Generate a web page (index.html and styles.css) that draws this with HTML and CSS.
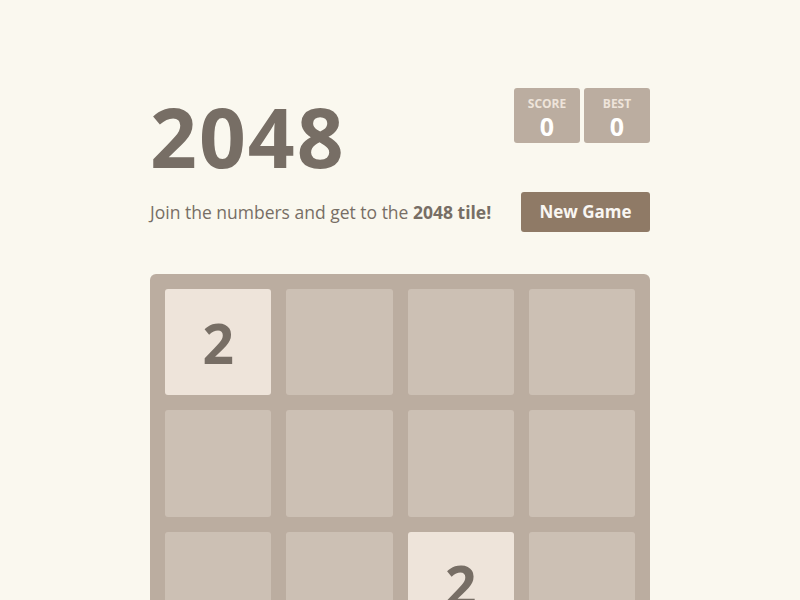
FILE: index.html
```html
<!DOCTYPE html>
<html>
<head>
<meta charset="utf-8">
<link rel="stylesheet" href="styles.css">
</head>
<body>
<div class="container">
  <div class="heading">
    <h1 class="title">2048</h1>
    <div class="scores">
      <div class="score-box"><div class="label">SCORE</div><div class="value">0</div></div>
      <div class="score-box"><div class="label">BEST</div><div class="value">0</div></div>
    </div>
  </div>
  <div class="intro-row">
    <p class="intro">Join the numbers and get to the <strong>2048 tile!</strong></p>
    <a class="new-game">New Game</a>
  </div>
  <div class="grid">
    <div class="cell tile">2</div>
    <div class="cell"></div>
    <div class="cell"></div>
    <div class="cell"></div>
    <div class="cell"></div>
    <div class="cell"></div>
    <div class="cell"></div>
    <div class="cell"></div>
    <div class="cell"></div>
    <div class="cell"></div>
    <div class="cell tile">2</div>
    <div class="cell"></div>
    <div class="cell"></div>
    <div class="cell"></div>
    <div class="cell"></div>
    <div class="cell"></div>
  </div>
</div>
</body>
</html>
```

FILE: styles.css
```css
html, body {
  margin: 0;
  padding: 0;
  background: #faf8ef;
  color: #776e65;
  font-family: "Open Sans", "Noto Sans", sans-serif;
  font-size: 18px;
}
.container {
  width: 500px;
  margin: 0 auto;
  padding-top: 88px;
}
.heading {
  display: flex;
  justify-content: space-between;
  align-items: flex-start;
  height: 96px;
}
.title {
  margin: 0;
  font-size: 82px;
  line-height: 96px;
  font-weight: bold;
  letter-spacing: 2px;
}
.scores {
  display: flex;
  gap: 4px;
}
.score-box {
  width: 66px;
  height: 55px;
  background: #bbada0;
  border-radius: 3px;
  text-align: center;
  box-sizing: border-box;
  padding-top: 9px;
}
.label {
  color: #eee4da;
  font-size: 12px;
  line-height: 14px;
  font-weight: bold;
}
.value {
  color: #ffffff;
  font-size: 25px;
  line-height: 30px;
  font-weight: bold;
}
.intro-row {
  margin-top: 8px;
  display: flex;
  justify-content: space-between;
  align-items: center;
  height: 40px;
}
.intro {
  margin: 0;
  font-size: 17.5px;
  line-height: 40px;
}
.new-game {
  display: block;
  width: 129px;
  text-align: center;
  background: #8f7a66;
  color: #f9f6f2;
  border-radius: 3px;
  height: 40px;
  line-height: 40px;
  font-weight: bold;
  font-size: 17px;
}
.grid {
  margin-top: 42px;
  background: #bbada0;
  border-radius: 6px;
  padding: 15px;
  display: grid;
  grid-template-columns: repeat(4, 1fr);
  gap: 15px;
  width: 500px;
  box-sizing: border-box;
}
.cell {
  height: 106.25px;
  border-radius: 3px;
  background: rgba(238, 228, 218, 0.35);
}
.tile {
  background: #eee4da;
  font-size: 55px;
  font-weight: bold;
  display: flex;
  align-items: center;
  justify-content: center;
  color: #776e65;
}
```
